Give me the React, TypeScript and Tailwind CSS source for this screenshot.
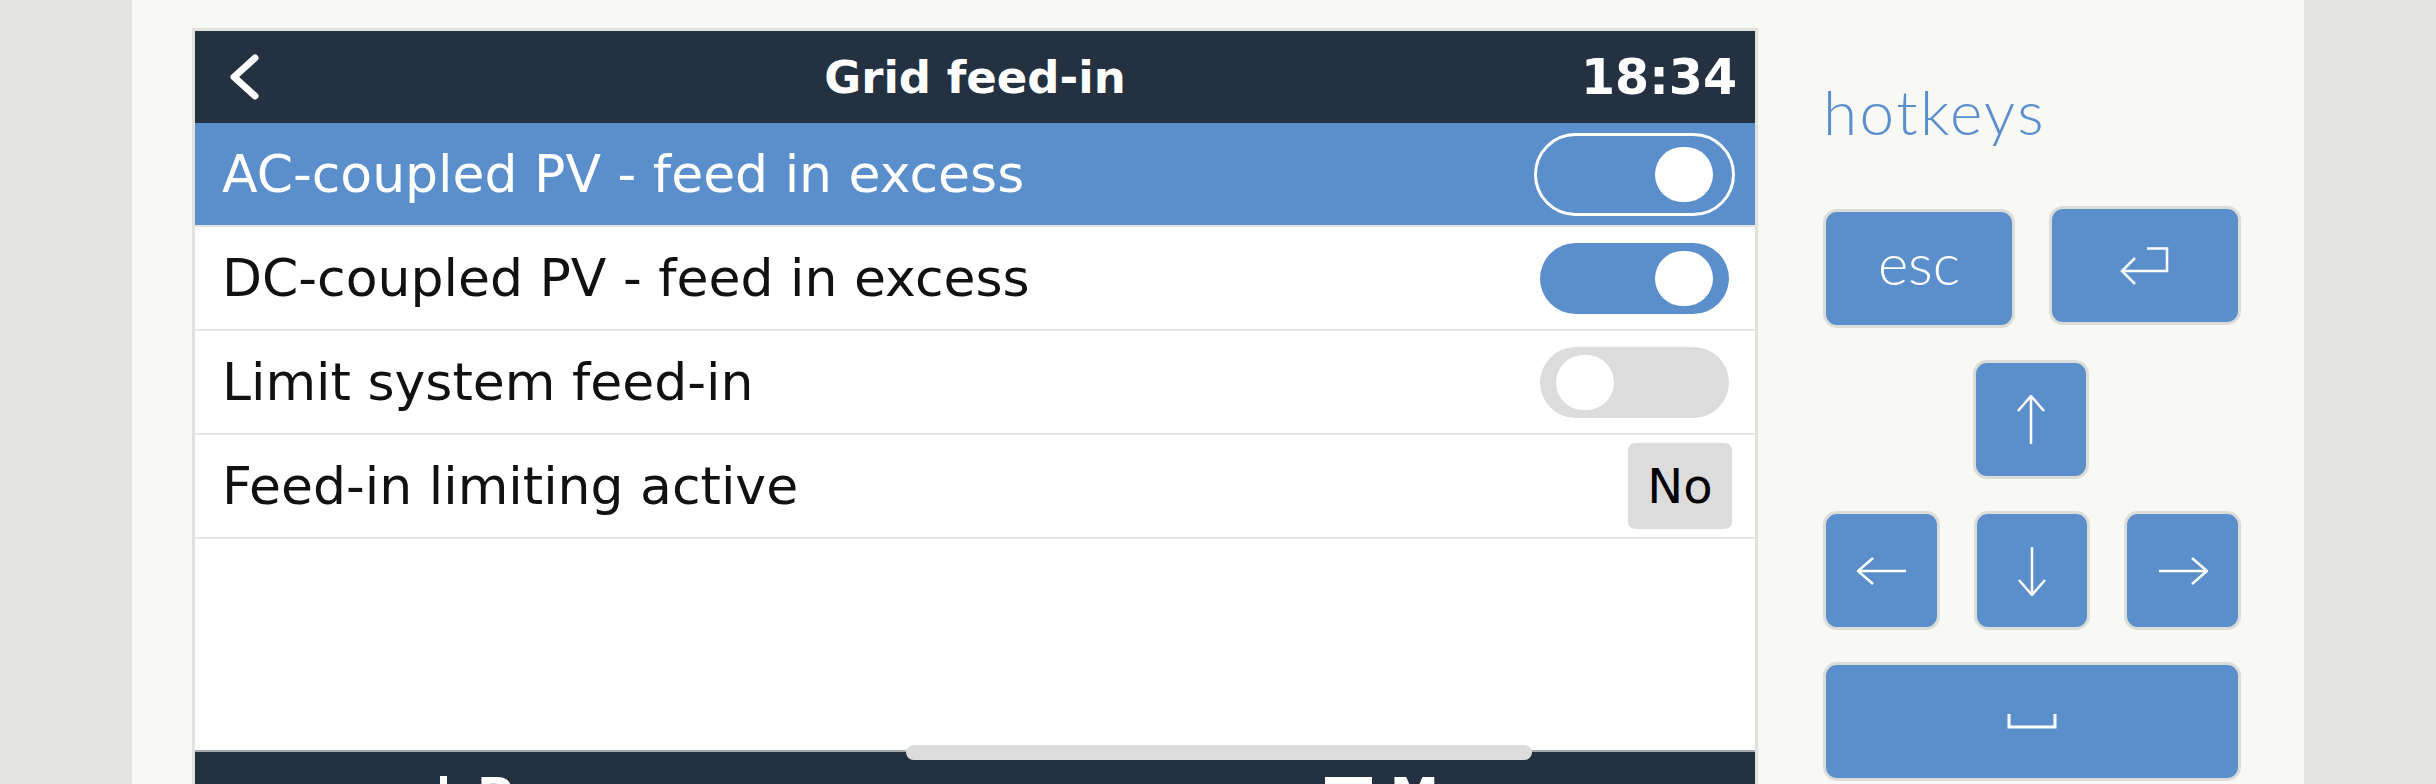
import React from 'react';

const rows = [
  { label: 'AC-coupled PV - feed in excess', kind: 'toggle', on: true, selected: true },
  { label: 'DC-coupled PV - feed in excess', kind: 'toggle', on: true, selected: false },
  { label: 'Limit system feed-in', kind: 'toggle', on: false, selected: false },
  { label: 'Feed-in limiting active', kind: 'value', value: 'No', selected: false },
];

function Toggle({ on, focused }: { on: boolean; focused: boolean }) {
  return (
    <div
      className={`flex h-[71px] w-[189px] items-center rounded-full px-[16px] ${
        on ? 'justify-end bg-[#5b8fcb]' : 'justify-start bg-[#dcdcdc]'
      } ${focused ? 'outline-3 outline-offset-3 outline-white' : ''}`}
    >
      <div className="h-[55px] w-[58px] rounded-full bg-white" />
    </div>
  );
}

function Key({ w, children, className = '' }: { w: string; children: React.ReactNode; className?: string }) {
  return (
    <div
      className={`flex h-[119px] ${w} items-center justify-center rounded-[14px] border-[3px] border-[#dcdcd8] bg-[#5b8fcb] text-white ${className}`}
    >
      {children}
    </div>
  );
}

const Arrow = ({ rotate }: { rotate: string }) => (
  <svg width="50" height="50" viewBox="0 0 50 50" className={rotate} fill="none" stroke="white" strokeWidth="2.5">
    <path d="M25 1 V49" />
    <path d="M12 16 L25 1 L38 16" />
  </svg>
);

export default function App() {
  return (
    <div className="flex h-[784px] w-[2436px] overflow-hidden bg-[#e4e5e0]">
      <div className="w-[132px] shrink-0" />
      <div className="flex w-[2172px] shrink-0 bg-[#f8f8f4] pl-[60px] pt-[28px]">
        {/* device screen */}
        <div className="relative flex h-[800px] w-[1566px] shrink-0 flex-col border-[3px] border-b-0 border-[#e1e1dd] bg-white font-['DejaVu_Sans',sans-serif]">
          <div className="grid h-[92px] shrink-0 grid-cols-[1fr_auto_1fr] items-center bg-[#243141] text-white">
            <div className="pl-[32px]">
              <svg width="34" height="48" viewBox="0 0 34 48" fill="none" stroke="white" strokeWidth="7" strokeLinecap="round" strokeLinejoin="round">
                <path d="M28 5 L7 24 L28 43" />
              </svg>
            </div>
            <div className="text-[45px] font-bold leading-none">Grid feed-in</div>
            <div className="pr-[18px] text-right text-[49px] font-bold leading-none">18:34</div>
          </div>

          <div className="h-[627px] shrink-0">
            {rows.map((r) => (
              <div
                key={r.label}
                className={`flex h-[104px] items-center justify-between border-b-2 border-[#e3e3e3] pl-[27px] pr-[26px] ${
                  r.selected ? 'bg-[#5b8fcb] text-white' : 'bg-white text-[#111]'
                }`}
              >
                <span className="text-[52px] leading-none">{r.label}</span>
                {r.kind === 'toggle' ? (
                  <Toggle on={!!r.on} focused={r.selected} />
                ) : (
                  <div className="-mr-[3px] flex h-[86px] w-[104px] items-center justify-center rounded-[7px] bg-[#dcdcdc] text-[48px] leading-none text-black">
                    {r.value}
                  </div>
                )}
              </div>
            ))}
          </div>

          <div className="relative flex-1 border-t-2 border-[#a3a9b0] bg-[#243141] text-white">
            <div className="absolute left-[245px] top-[20px] flex items-start gap-[30px]">
              <div className="mt-[4px] h-[30px] w-[7px] bg-white" />
              <span className="text-[49px] font-bold leading-none">Pages</span>
            </div>
            <div className="absolute left-[1130px] top-[20px] flex items-start gap-[18px]">
              <div className="mt-[5px] h-[36px] w-[47px] bg-white" />
              <span className="text-[49px] font-bold leading-none">Menu</span>
            </div>
          </div>

          <div className="absolute left-[711px] top-[714px] z-10 h-[15px] w-[626px] rounded-full bg-[#dcdcdc]" />
        </div>

        {/* hotkeys */}
        <div className="ml-[65px] flex flex-col font-['Lato',sans-serif] font-light">
          <div className="mt-[52px] text-[62px] leading-none tracking-[2.5px] text-[#5b8fcb]">hotkeys</div>
          <div className="mt-[64px] flex flex-col gap-[32px]">
            <div className="flex items-start gap-[34px]">
              <Key w="w-[192px]" className="mt-[3px]">
                <span className="pb-[12px] text-[58px] leading-none">esc</span>
              </Key>
              <Key w="w-[192px]">
                <svg width="50" height="38" viewBox="0 0 50 38" fill="none" stroke="white" strokeWidth="2.5">
                  <path d="M27 1.5 H47 V24 H2" />
                  <path d="M15 11 L2 24 L15 37" />
                </svg>
              </Key>
            </div>
            <div className="flex gap-[34px]">
              <div className="w-[116px]" />
              <Key w="w-[116px]">
                <Arrow rotate="" />
              </Key>
            </div>
            <div className="flex gap-[34px]">
              <Key w="w-[117px]">
                <Arrow rotate="-rotate-90" />
              </Key>
              <Key w="w-[116px]">
                <Arrow rotate="rotate-180" />
              </Key>
              <Key w="w-[117px]">
                <Arrow rotate="rotate-90" />
              </Key>
            </div>
            <Key w="w-[418px]">
              <svg width="50" height="16" viewBox="0 0 50 16" fill="none" stroke="white" strokeWidth="3">
                <path d="M2 0 V13 H48 V0" />
              </svg>
            </Key>
          </div>
        </div>
      </div>
      <div className="flex-1" />
    </div>
  );
}
